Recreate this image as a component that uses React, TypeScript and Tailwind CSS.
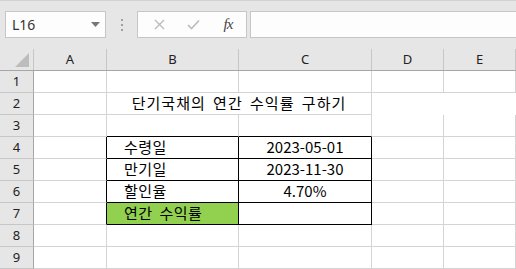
import React from "react"

const cols = [
  { label: "A", w: "w-[73px]" },
  { label: "B", w: "w-[132px]" },
  { label: "C", w: "w-[133px]" },
  { label: "D", w: "w-[72px]" },
  { label: "E", w: "w-[72px]" },
]

type Cell = { text?: string; align?: "left" | "center"; fill?: boolean; box?: boolean; indent?: boolean }

const rows: Record<number, Record<string, Cell>> = {
  4: { B: { text: "수령일", indent: true, box: true }, C: { text: "2023-05-01", align: "center", box: true } },
  5: { B: { text: "만기일", indent: true, box: true }, C: { text: "2023-11-30", align: "center", box: true } },
  6: { B: { text: "할인율", indent: true, box: true }, C: { text: "4.70%", align: "center", box: true } },
  7: { B: { text: "연간 수익률", indent: true, box: true, fill: true }, C: { box: true } },
}

function Toolbar() {
  return (
    <div className="h-[46px] bg-[#e6e6e6] border-t border-[#d2d2d2] flex items-start pt-[10px] pl-[5px]">
      <div className="w-[101px] h-[27px] bg-[#fdfdfd] border border-[#c6c6c6] flex items-center justify-between pl-[6px] pr-[5px]">
        <span className="text-[14px] text-[#333] font-['Noto_Sans',sans-serif]">L16</span>
        <svg width="9" height="5" viewBox="0 0 9 5">
          <path d="M0 0 L9 0 L4.5 5 Z" fill="#777" />
        </svg>
      </div>
      <div className="w-[31px] h-[27px] flex flex-col items-center justify-center gap-[3px]">
        <span className="w-[2px] h-[2px] bg-[#a0a0a0]" />
        <span className="w-[2px] h-[2px] bg-[#a0a0a0]" />
        <span className="w-[2px] h-[2px] bg-[#a0a0a0]" />
      </div>
      <div className="w-[110px] h-[27px] bg-[#fdfdfd] border border-[#c6c6c6] flex items-center">
        <div className="w-[38px] flex justify-center pl-[4px]">
          <svg width="11" height="11" viewBox="0 0 11 11">
            <path d="M1 1 L10 10 M10 1 L1 10" stroke="#bcbcbc" strokeWidth="1.4" />
          </svg>
        </div>
        <div className="w-[34px] flex justify-center">
          <svg width="13" height="11" viewBox="0 0 13 11">
            <path d="M1 6 L4.5 9.5 L12 1.5" stroke="#bcbcbc" strokeWidth="1.6" fill="none" />
          </svg>
        </div>
        <div className="w-[36px] flex justify-center">
          <span className="italic text-[15px] text-[#444] font-['Liberation_Serif',serif] tracking-[-1px]">fx</span>
        </div>
      </div>
      <div className="flex-1 ml-[3px] h-[27px] bg-[#fdfdfd] border border-[#c6c6c6] border-r-0" />
    </div>
  )
}

export default function App() {
  return (
    <div className="w-[516px] h-[269px] overflow-hidden bg-white font-['Noto_Sans_CJK_KR',sans-serif]">
      <Toolbar />
      <div className="flex h-[25px] bg-[#e6e6e6] border-b border-[#a6a6a6]">
        <div className="w-[34px] border-r border-[#c6c6c6] flex items-end justify-end pr-[4px] pb-[3px] mt-[3px]">
          <svg width="14" height="14" viewBox="0 0 14 14">
            <path d="M14 0 L14 14 L0 14 Z" fill="#bdbdbd" />
          </svg>
        </div>
        {cols.map((c) => (
          <div
            key={c.label}
            className={`${c.w} border-r border-[#c6c6c6] mt-[3px] flex items-center justify-center text-[13px] text-[#222] font-['Noto_Sans',sans-serif]`}
          >
            {c.label}
          </div>
        ))}
      </div>
      {[1, 2, 3, 4, 5, 6, 7, 8, 9].map((r) => (
        <div key={r} className="flex h-[22px]">
          <div className="w-[34px] bg-[#e6e6e6] border-r border-[#a6a6a6] border-b border-b-[#c6c6c6] flex items-center justify-center text-[13px] text-[#222] font-['Noto_Sans',sans-serif]">
            {r}
          </div>
          {r === 2 ? (
            <>
              <div className="w-[73px] border-r border-b border-[#d4d4d4]" />
              <div className="w-[265px] border-r border-b border-[#d4d4d4] flex items-center justify-center text-[15px] text-black tracking-[1px] [word-spacing:3px]">
                단기국채의 연간 수익률 구하기
              </div>
            </>
          ) : (
            cols.map((c) => {
              const cell = rows[r]?.[c.label]
              const nextBox = rows[r]?.B?.box && c.label === "A"
              const belowBox = r === 3 && (c.label === "B" || c.label === "C")
              const rightBlack = cell?.box || nextBox
              const bottomBlack = cell?.box || belowBox
              return (
                <div
                  key={c.label}
                  className={`${c.w} border-r border-b flex items-center text-[15px] text-black ${
                    rightBlack ? "border-r-black" : "border-r-[#d4d4d4]"
                  } ${bottomBlack ? "border-b-black" : "border-b-[#d4d4d4]"} ${
                    cell?.fill ? "bg-[#92d050]" : ""
                  } ${cell?.align === "center" ? "justify-center" : ""} ${
                    cell?.indent ? "pl-[17px] tracking-[0.5px] [word-spacing:3px]" : ""
                  }`}
                >
                  {cell?.text}
                </div>
              )
            })
          )}
        </div>
      ))}
    </div>
  )
}
